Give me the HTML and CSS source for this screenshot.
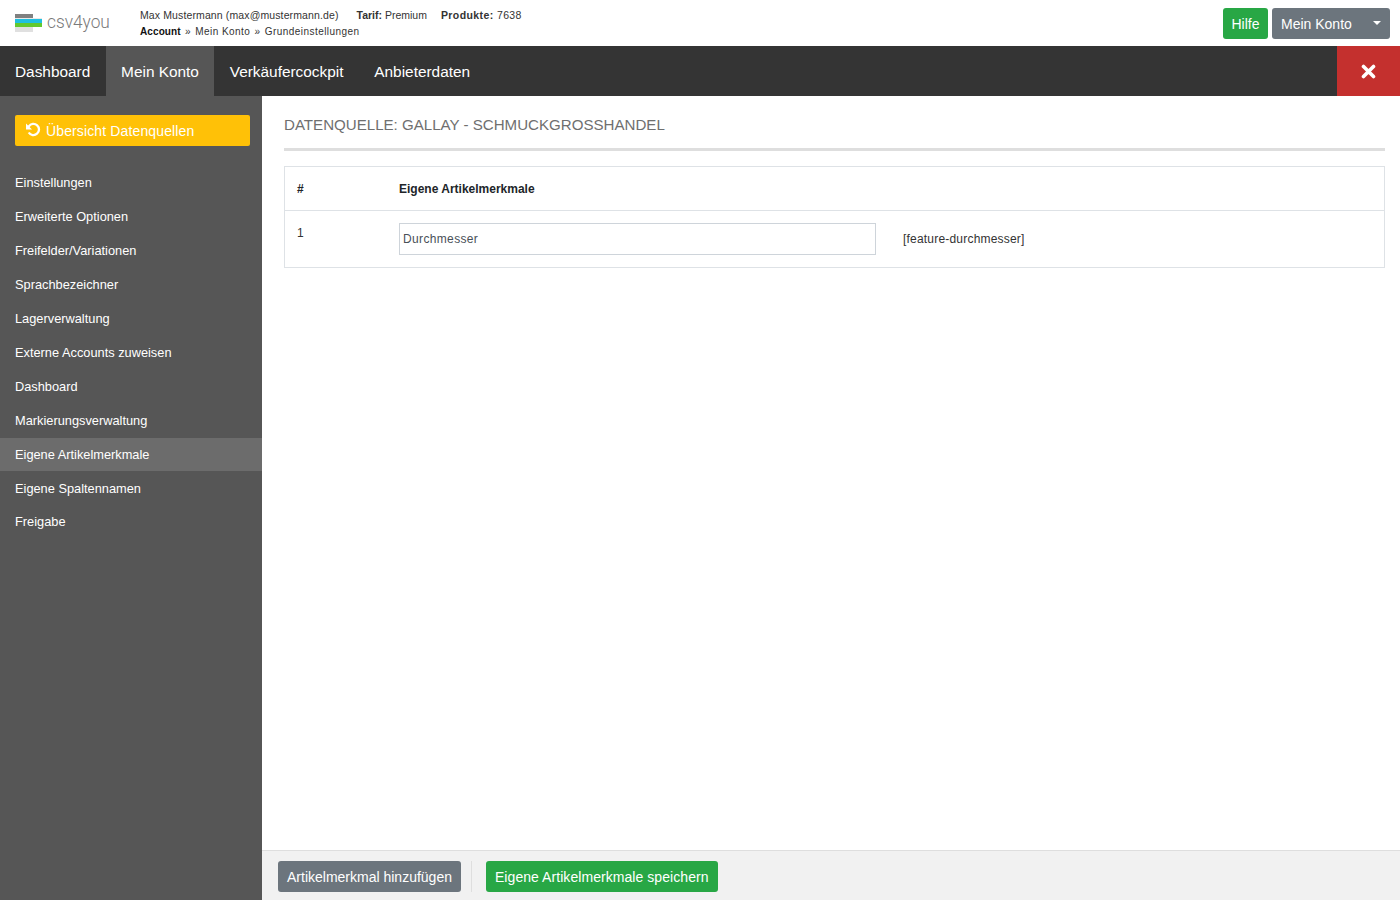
FILE: index.html
```html
<!DOCTYPE html>
<html lang="de">
<head>
<meta charset="utf-8">
<title>csv4you</title>
<link rel="stylesheet" href="styles.css">
</head>
<body>
<header class="top">
  <div class="brand">
    <svg class="logo" width="28" height="20" viewBox="0 0 28 20"><rect x="0" y="0" width="18" height="4" fill="#808080"/><rect x="0" y="4" width="27" height="1" fill="#e8e8e8"/><rect x="0" y="5" width="27" height="4" fill="#1fc0e0"/><rect x="0" y="9" width="27" height="4" fill="#62c92f"/><rect x="0" y="13" width="18" height="5" fill="#e0e0e0"/></svg>
    <span class="brand-name">csv4you</span>
  </div>
  <div class="info">
    <div class="info-line">
      <span class="info-item name">Max Mustermann (max@mustermann.de)</span>
      <span class="info-item"><b>Tarif:</b> Premium</span>
      <span class="info-item wide"><b>Produkte:</b> 7638</span>
    </div>
    <div class="crumbs"><b>Account</b> <i>»</i> Mein Konto <i>»</i> Grundeinstellungen</div>
  </div>
  <div class="top-actions">
    <a class="btn green help">Hilfe</a>
    <a class="btn gray konto">Mein Konto<span class="caret"></span></a>
  </div>
</header>
<nav class="mainnav">
  <a class="tab">Dashboard</a>
  <a class="tab active">Mein Konto</a>
  <a class="tab">Verkäufercockpit</a>
  <a class="tab">Anbieterdaten</a>
  <a class="close"><svg width="15" height="15" viewBox="0 0 15 15"><path d="M2.500 2.500l10 10M12.500 2.500l-10 10" stroke="#fff" stroke-width="3.600" stroke-linecap="round"/></svg></a>
</nav>
<div class="body">
  <aside class="side">
    <a class="overview"><svg width="16" height="16" viewBox="0 0 16 16"><path d="M3.700 10.500a5.600 5.600 0 1 0 .1-6.200L2.800 5.800" fill="none" stroke="#fff" stroke-width="2.300"/><path d="M1 1.500v6h6z" fill="#fff"/></svg>Übersicht Datenquellen</a>
    <ul class="menu">
      <li>Einstellungen</li>
      <li>Erweiterte Optionen</li>
      <li>Freifelder/Variationen</li>
      <li>Sprachbezeichner</li>
      <li>Lagerverwaltung</li>
      <li>Externe Accounts zuweisen</li>
      <li>Dashboard</li>
      <li>Markierungsverwaltung</li>
      <li class="current">Eigene Artikelmerkmale</li>
      <li>Eigene Spaltennamen</li>
      <li>Freigabe</li>
    </ul>
  </aside>
  <main class="content">
    <div class="scroll">
      <h1 class="title">DATENQUELLE: GALLAY - SCHMUCKGROSSHANDEL</h1>
      <table class="grid">
        <tr class="head"><th class="c1">#</th><th colspan="2">Eigene Artikelmerkmale</th></tr>
        <tr>
          <td class="c1 num">1</td>
          <td class="c2"><input class="field" type="text" value="Durchmesser"></td>
          <td class="c3">[feature-durchmesser]</td>
        </tr>
      </table>
    </div>
    <footer class="foot">
      <a class="btn gray">Artikelmerkmal hinzufügen</a>
      <span class="sep"></span>
      <a class="btn green save">Eigene Artikelmerkmale speichern</a>
    </footer>
  </main>
</div>
</body>
</html>
```
FILE: styles.css
```css
* { box-sizing: border-box; }
html, body { margin: 0; height: 100%; }
body {
  height: 900px;
  overflow: hidden;
  display: flex;
  flex-direction: column;
  font-family: "Liberation Sans", Arial, sans-serif;
  color: #212529;
  background: #fff;
}
.top {
  height: 46px;
  flex: none;
  display: flex;
  align-items: flex-start;
  background: #fff;
}
.brand {
  width: 140px;
  height: 46px;
  padding-left: 15px;
  display: flex;
  align-items: center;
}
.logo { flex: none; margin-top: 1px; margin-right: 4px; }
.brand-name {
  font-family: "Roboto", sans-serif;
  font-weight: 300;
  font-size: 19px;
  color: #7a7a7a;
  margin-bottom: 4px;
  transform: scaleX(.91);
  transform-origin: left center;
}
.info { padding-top: 7px; font-size: 10.5px; color: #333; }
.info-line { display: flex; height: 17px; line-height: 16px; }
.info-item { margin-right: 18px; }
.info-item.name { letter-spacing: .12px; }
.info-item.wide { margin-left: -4px; letter-spacing: .4px; }
.info-item b { color: #333; }
.crumbs { font-size: 10px; line-height: 16px; letter-spacing: .45px; }
.crumbs b { color: #111; letter-spacing: .1px; }
.crumbs i { font-style: normal; margin: 0 1px; }
.top-actions {
  margin-left: auto;
  display: flex;
  gap: 4px;
  padding: 8px 10px 0 0;
}
.btn {
  display: inline-block;
  height: 31px;
  line-height: 32px;
  padding: 0 9px;
  font-size: 14px;
  color: #fff;
  border-radius: 3px;
  white-space: nowrap;
}
.green { background: #28a745; }
.gray { background: #6c757d; }
.help { width: 45px; text-align: center; padding: 0; }
.save { letter-spacing: .06px; }
.konto { width: 118px; position: relative; }
.caret {
  position: absolute;
  right: 9px;
  top: 13px;
  border-left: 4px solid transparent;
  border-right: 4px solid transparent;
  border-top: 4px solid #fff;
}
.mainnav {
  height: 50px;
  flex: none;
  background: #343434;
  display: flex;
}
.tab {
  height: 50px;
  line-height: 51px;
  padding: 0 15.4px;
  font-size: 15.4px;
  color: #fff;
}
.tab:first-child { padding-left: 15px; }
.tab.active { background: #565656; }
.close {
  margin-left: auto;
  width: 63px;
  background: #c4302e;
  display: flex;
  align-items: center;
  justify-content: center;
}
.body { flex: 1; display: flex; min-height: 0; }
.side {
  width: 262px;
  flex: none;
  background: #565656;
  padding: 19px 0 0;
}
.overview {
  margin: 0 12px 0 15px;
  height: 31px;
  background: #ffc107;
  border-radius: 2px;
  color: #fff;
  font-size: 14px;
  letter-spacing: .13px;
  display: flex;
  align-items: center;
  padding-left: 10px;
  gap: 5px;
}
.overview svg { flex: none; margin-top: -1px; }
.menu { list-style: none; margin: 20px 0 0; padding: 0; }
.menu li {
  height: 34px;
  line-height: 33px;
  padding-left: 15px;
  font-size: 12.8px;
  color: #fff;
}
.menu li.current { background: #6c6c6c; height: 33px; margin-bottom: 1px; }
.menu li:last-child { margin-top: -1px; }
.content { flex: 1; display: flex; flex-direction: column; min-width: 0; }
.scroll { flex: 1; padding: 0 15px 0 22px; }
.title {
  margin: 0;
  padding: 20px 0 15px;
  height: 55px;
  border-bottom: 3px solid #dedede;
  font-size: 15.1px;
  font-weight: 400;
  line-height: 18px;
  color: #6f6f6f;
}
.grid {
  margin-top: 15px;
  width: 100%;
  border-collapse: collapse;
  border: 1px solid #dee2e6;
  font-size: 12px;
}
.grid th {
  height: 44px;
  text-align: left;
  padding: 0 12px;
  color: #212529;
  font-weight: 700;
}
.grid th + th { padding-left: 12.5px; }
.head { border-bottom: 1px solid #dee2e6; }
.grid td { height: 57px; padding: 0 12px; vertical-align: middle; color: #333; }
.c1 { width: 102px; }
.num { padding-bottom: 12px !important; }
.c2 { width: 502px; }
.grid .c3 { padding-left: 14.5px; letter-spacing: .2px; }
.field {
  display: block;
  width: 477px;
  height: 32px;
  border: 1px solid #ced4da;
  padding: 0 3.5px;
  font: 12px "Liberation Sans", Arial, sans-serif;
  letter-spacing: .35px;
  color: #495057;
  background: #fff;
  border-radius: 0;
  outline: 0;
}
.foot {
  height: 50px;
  flex: none;
  background: #f1f1f1;
  border-top: 1px solid #dedede;
  padding: 10px 0 0 16px;
  display: flex;
  align-items: flex-start;
}
.sep { width: 1px; height: 31px; background: #dedede; margin: 0 14px 0 10px; }
```
